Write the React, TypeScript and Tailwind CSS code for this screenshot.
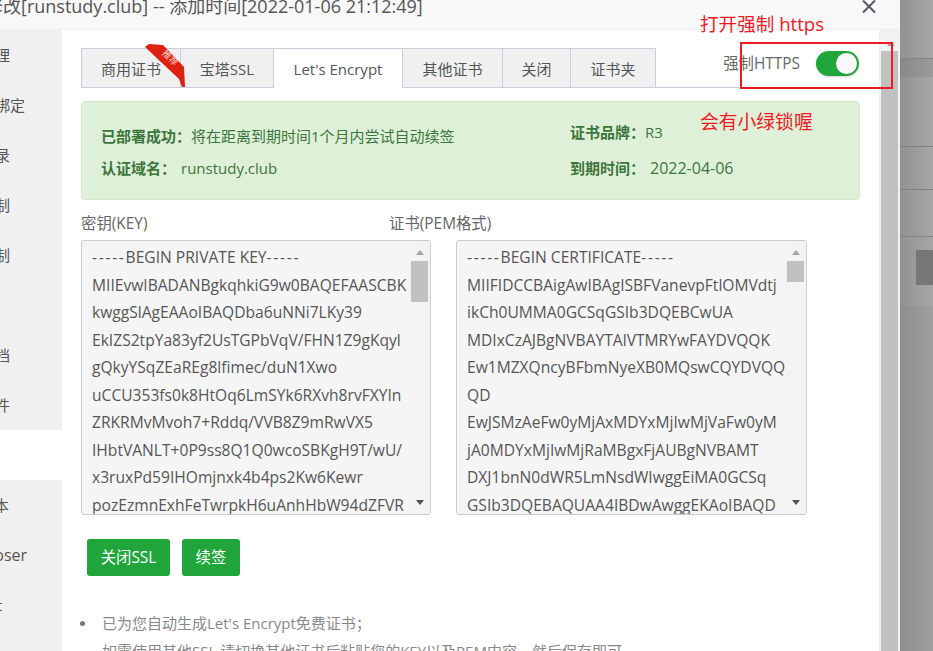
const FONT = "font-['Open_Sans','Noto_Sans_CJK_SC',sans-serif]";

const sideItems = ["域名管理", "子目录绑定", "网站目录", "流量限制", "访问限制", "伪静态", "默认文档", "配置文件", "SSL", "PHP版本", "Composer", "Tomcat"];
const tabs = [
  { label: "商用证书", w: "w-[100px]" },
  { label: "宝塔SSL", w: "w-[93px]" },
  { label: "Let's Encrypt", w: "w-[129px]", active: true },
  { label: "其他证书", w: "w-[100px]" },
  { label: "关闭", w: "w-[68px]" },
  { label: "证书夹", w: "w-[85px]" },
];
const keyLines = [
  "MIIEvwIBADANBgkqhkiG9w0BAQEFAASCBK",
  "kwggSlAgEAAoIBAQDba6uNNi7LKy39",
  "EkIZS2tpYa83yf2UsTGPbVqV/FHN1Z9gKqyl",
  "gQkyYSqZEaREg8lfimec/duN1Xwo",
  "uCCU353fs0k8HtOq6LmSYk6RXvh8rvFXYIn",
  "ZRKRMvMvoh7+Rddq/VVB8Z9mRwVX5",
  "IHbtVANLT+0P9ss8Q1Q0wcoSBKgH9T/wU/",
  "x3ruxPd59IHOmjnxk4b4ps2Kw6Kewr",
  "pozEzmnExhFeTwrpkH6uAnhHbW94dZFVR",
];
const certLines = [
  "MIIFIDCCBAigAwIBAgISBFVanevpFtlOMVdtj",
  "ikCh0UMMA0GCSqGSIb3DQEBCwUA",
  "MDIxCzAJBgNVBAYTAlVTMRYwFAYDVQQK",
  "Ew1MZXQncyBFbmNyeXB0MQswCQYDVQQ",
  "QD",
  "EwJSMzAeFw0yMjAxMDYxMjIwMjVaFw0yM",
  "jA0MDYxMjIwMjRaMBgxFjAUBgNVBAMT",
  "DXJ1bnN0dWR5LmNsdWIwggEiMA0GCSq",
  "GSIb3DQEBAQUAA4IBDwAwggEKAoIBAQD",
];

function CodeBox({ head, lines, thumb, width }: { head: string; lines: string[]; thumb: string; width: string }) {
  return (
    <div className={`relative h-[275px] ${width} overflow-hidden rounded-[3px] border border-[#cccccc] bg-[#f5f5f5] pl-[10px] pt-[3px]`}>
      <div className="h-[27.5px] whitespace-nowrap text-[15.6px] leading-[27.5px] text-[#555555]">
        <span className="tracking-[1.7px]">-----</span>{head}<span className="tracking-[1.7px]">-----</span>
      </div>
      {lines.map((l) => (
        <div key={l} className="h-[27.5px] whitespace-nowrap text-[15.6px] leading-[27.5px] text-[#555555]">{l}</div>
      ))}
      <div className="absolute bottom-0 right-0 top-0 flex w-[21px] flex-col items-center bg-[#f3f3f3]">
        <div className="mt-[9px] h-0 w-0 border-x-[4px] border-b-[5px] border-x-transparent border-b-[#a3a3a3]" />
        <div className={`mt-[6px] w-[17px] bg-[#c1c1c1] ${thumb}`} />
        <div className="mb-[9px] mt-auto h-0 w-0 border-x-[4px] border-t-[5px] border-x-transparent border-t-[#505050]" />
      </div>
    </div>
  );
}

function Tabs() {
  return (
    <div className="relative flex h-[40px] border-b border-[#ccccdd]">
      {tabs.map((t, i) => (
        <div
          key={t.label}
          className={`flex h-[40px] items-center justify-center border-y border-r border-[#ccccdd] pt-[2px] text-[15px] text-[#555555] ${t.w} ${i === 0 ? "border-l" : ""} ${t.active ? "border-b-white bg-white" : "bg-[#f0f0f0]"}`}
        >
          {t.label}
        </div>
      ))}
      <div className="ml-auto flex h-[30px] items-center self-start pt-[1px]">
        <span className="text-[15.4px] text-[#666666]">强制HTTPS</span>
        <div className="ml-[16px] mr-[1px] flex h-[25px] w-[43px] items-center justify-end rounded-full bg-[#20a53a] pr-[2px] shadow-[0_1px_2px_rgba(0,0,0,0.2)]">
          <div className="h-[21px] w-[21px] rounded-full bg-[#f8f8f8]" />
        </div>
      </div>
      <div className="absolute left-[64px] top-[-4px] h-[44px] w-[40px]">
        <svg width="40" height="44" viewBox="0 0 40 44" className="absolute inset-0">
          <polygon points="0,3 4,0 18,1 39,23 40,43 37,43 34,35" fill="#dd2211" />
        </svg>
        <span className="absolute left-[16px] top-[8px] rotate-45 text-[9px] leading-[12px] text-[#f9cfc8]">推荐</span>
      </div>
    </div>
  );
}

function Alert() {
  return (
    <div className="mt-[13px] flex h-[99px] rounded-[4px] border border-[#d6e9c6] bg-[#dff0d8] pl-[19px] pt-[20px] text-[15px] text-[#3c763d]">
      <div className="w-[469px]">
        <div className="h-[32px] leading-[28px]"><b className="font-bold">已部署成功：</b>将在距离到期时间1个月内尝试自动续签</div>
        <div className="leading-[28px]"><b className="font-bold">认证域名：</b><span className="ml-[5px]">runstudy.club</span></div>
      </div>
      <div>
        <div className="h-[32px] leading-[20px]"><b className="font-bold">证书品牌：</b>R3</div>
        <div className="leading-[28px]"><b className="font-bold">到期时间：</b><span className="ml-[5px] text-[16px]">2022-04-06</span></div>
      </div>
    </div>
  );
}

export default function App() {
  return (
    <div className={`relative flex h-[651px] w-[933px] overflow-hidden bg-[#999999] ${FONT}`}>
      <div className="ml-[-50px] mt-[-13px] flex h-[664px] w-[950px] shrink-0 flex-col overflow-hidden bg-white">
        <div className="flex h-[43px] shrink-0 items-center justify-between border-b border-[#eeeeee] bg-[#f8f8f8] pl-[50px] pr-[23px]">
          <span className="mb-[4px] ml-[-51px] whitespace-nowrap text-[18px] text-[#555555]">站点修改[runstudy.club] -- 添加时间[2022-01-06 21:12:49]</span>
          <svg width="16" height="16" viewBox="0 0 16 16" className="mb-[2px]">
            <path d="M2 1.5 L14 13.5 M14 1.5 L2 13.5" stroke="#555566" strokeWidth="2" fill="none" />
          </svg>
        </div>
        <div className="flex min-h-0 flex-1">
          <div className="w-[112px] shrink-0 overflow-hidden bg-[#f0f0f0]">
            {sideItems.map((s) => (
              <div key={s} className={`h-[50px] whitespace-nowrap leading-[50px] text-[#555555] ${s === "Composer" ? "text-[16px]" : "text-[15px]"} ${s === "SSL" ? "bg-white" : ""}`}>{s}</div>
            ))}
          </div>
          <div className="w-[817px] shrink-0 overflow-hidden pl-[19px] pr-[19px] pt-[18px]">
            <Tabs />
            <Alert />
            <div className="mt-[15px] flex h-[18px] text-[15.4px] leading-[18px] text-[#666666]">
              <span className="w-[308px]">密钥(KEY)</span>
              <span>证书(PEM格式)</span>
            </div>
            <div className="mt-[7px] flex gap-[25px]">
              <CodeBox head="BEGIN PRIVATE KEY" lines={keyLines} thumb="h-[41px]" width="w-[350px]" />
              <CodeBox head="BEGIN CERTIFICATE" lines={certLines} thumb="h-[21px]" width="w-[351px]" />
            </div>
            <div className="ml-[6px] mt-[24px] flex gap-[12px] text-[15.4px] text-white">
              <div className="flex h-[37px] w-[83px] items-center justify-center rounded-[3px] bg-[#20a53a]">关闭SSL</div>
              <div className="flex h-[37px] w-[58px] items-center justify-center rounded-[3px] bg-[#20a53a]">续签</div>
            </div>
            <ul className="mt-[33px] text-[15px] leading-[28px] text-[#888888]">
              <li className="flex items-center whitespace-nowrap">
                <span className="ml-[-1px] mr-[17px] h-[5px] w-[5px] rounded-full bg-[#777777]" />已为您自动生成Let's Encrypt免费证书；
              </li>
              <li className="whitespace-nowrap pl-[21px]">如需使用其他SSL,请切换其他证书后粘贴您的KEY以及PEM内容，然后保存即可。</li>
            </ul>
          </div>
          <div className="relative w-[21px] shrink-0 bg-[#f1f1f1] pl-[2px] pr-[2px]">
            <div className="ml-[6px] mt-[11px] h-0 w-0 border-x-[4px] border-b-[5px] border-x-transparent border-b-[#a3a3a3]" />
            <div className="mt-[5px] h-[640px] w-[17px] bg-[#c1c1c1]" />
          </div>
        </div>
      </div>
      <div className="flex min-w-0 flex-1 flex-col bg-gradient-to-r from-[#929292] to-[#a6a6a6]">
        <div className="h-[58px]" />
        <div className="h-[19px] border-t border-[#858585] bg-[#00000010]" />
        <div className="h-[69px]" />
        <div className="h-[43px] border-t border-[#7f7f7f]" />
        <div className="h-[47px] border-t border-[#808080]" />
        <div className="h-[70px] border-t border-[#858585] pl-[16px] pt-[13px]">
          <div className="h-[35px] bg-[#767676]" />
        </div>
        <div className="flex-1 bg-[#00000008]" />
      </div>
      <div className="absolute left-[700px] top-[12px] whitespace-nowrap text-[18.6px] leading-[24px] text-[#ed1c24]">打开强制 https</div>
      <div className="absolute left-[740px] top-[42px] h-[47px] w-[153px] border-2 border-[#ed1c24]" />
      <div className="absolute left-[700px] top-[110px] whitespace-nowrap text-[18.8px] leading-[24px] text-[#ed1c24]">会有小绿锁喔</div>
    </div>
  );
}
